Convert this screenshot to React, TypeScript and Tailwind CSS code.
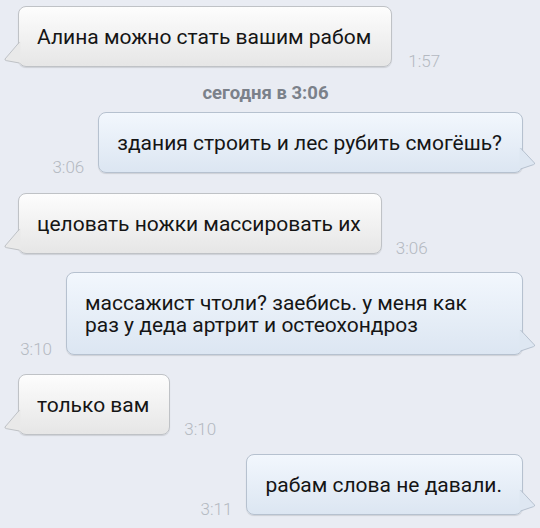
import React from 'react';

type Msg = {
  out: boolean;
  lines: string[];
  time: string;
  width?: string;
  mt: string;
};

const messages: Msg[] = [
  { out: true, lines: ['здания строить и лес рубить смогёшь?'], time: '3:06', mt: 'mt-0' },
  { out: false, lines: ['целовать ножки массировать их'], time: '3:06', mt: 'mt-[20px]' },
  {
    out: true,
    lines: ['массажист чтоли? заебись. у меня как', 'раз у деда артрит и остеохондроз'],
    time: '3:10',
    width: 'w-[457px]',
    mt: 'mt-[18px]',
  },
  { out: false, lines: ['только вам'], time: '3:10', mt: 'mt-[19px]' },
  { out: true, lines: ['рабам слова не давали.'], time: '3:11', mt: 'mt-[19px]' },
];

const InTail = () => (
  <svg className="absolute left-[-16px] bottom-0" width="18" height="28" viewBox="0 0 18 28">
    <path d="M17.5 3.5 L2 21 Q1.6 22.2 3.2 22.6 L17.5 25.5 Z" fill="#e9e9e9" />
    <path d="M16.5 4 L2 21 Q1.6 22.2 3.2 22.6 L16.5 25" fill="none" stroke="#bfc2c6" strokeWidth="1" />
  </svg>
);

const OutTail = () => (
  <svg className="absolute right-[-15px] bottom-0" width="18" height="28" viewBox="0 0 18 28">
    <path d="M0.5 3.5 L15.5 19 Q16 20.2 14.6 20.6 L0.5 25.5 Z" fill="#dee7f2" />
    <path d="M1.5 4 L15.5 19 Q16 20.2 14.6 20.6 L1.5 25" fill="none" stroke="#b6c1cf" strokeWidth="1" />
  </svg>
);

const Time = ({ t }: { t: string }) => (
  <span className="text-[17px] font-light leading-none text-[#b4b9c1] mb-[-3px]">{t}</span>
);

const Bubble = ({ out, lines, width }: { out: boolean; lines: string[]; width?: string }) => (
  <div
    className={`relative rounded-[8px] border pl-[18px] pr-[20px] pt-[19px] pb-[18px] text-[21px] leading-[22px] text-[#151515] shadow-[0_1px_1px_rgba(0,0,0,0.12)] ${
      out
        ? 'bg-gradient-to-b from-[#f2f7fd] to-[#dce6f2] border-[#b6c1cf]'
        : 'bg-gradient-to-b from-[#fdfdfd] to-[#e6e6e6] border-[#bfc2c6]'
    } ${width ?? ''}`}
  >
    {lines.map((l, i) => (
      <div key={i} className="whitespace-nowrap">
        {l}
      </div>
    ))}
    {out ? <OutTail /> : <InTail />}
  </div>
);

const App = () => {
  return (
    <div className="w-[540px] h-[528px] overflow-hidden bg-[#e9ecf3] pl-[18px] pr-[17px] pt-[6px] flex flex-col font-['Roboto',sans-serif]">
      {/* first incoming message */}
      <div className="flex items-end gap-[16px]">
        <Bubble out={false} lines={['Алина можно стать вашим рабом']} />
        <Time t="1:57" />
      </div>

      {/* day separator */}
      <div className="mt-[15px] mb-[8px] pr-[10px] text-center text-[18.5px] font-bold leading-[22px] text-[#7b818a]">
        сегодня в 3:06
      </div>

      {messages.map((m, i) =>
        m.out ? (
          <div key={i} className={`flex items-end justify-end gap-[14px] ${m.mt}`}>
            <Time t={m.time} />
            <Bubble out lines={m.lines} width={m.width} />
          </div>
        ) : (
          <div key={i} className={`flex items-end gap-[14px] ${m.mt}`}>
            <Bubble out={false} lines={m.lines} />
            <Time t={m.time} />
          </div>
        )
      )}
    </div>
  );
};

export default App;
